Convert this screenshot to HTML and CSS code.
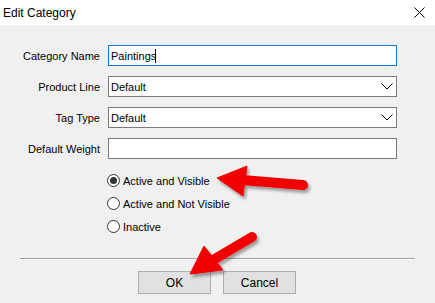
FILE: index.html
```html
<!DOCTYPE html>
<html lang="en">
<head>
    <meta charset="UTF-8">
    <title>Edit Category</title>
    <link rel="stylesheet" href="styles.css">
</head>
<body>
    <div id="dialog">
        <header class="title-bar">
            <span class="title">Edit Category</span>
            <svg class="close" width="11" height="11" viewBox="0 0 11 11">
                <path d="M0.5 0.5 L10.5 10.5 M10.5 0.5 L0.5 10.5" stroke="#000" stroke-width="1"/>
            </svg>
        </header>

        <section class="content">
            <div class="form-grid">
                <label for="cat-name">Category Name</label>
                <div class="field focused"><input id="cat-name" value="Paintings"><span class="caret"></span></div>

                <label>Product Line</label>
                <div class="field select"><span>Default</span>
                    <svg width="12" height="7" viewBox="0 0 12 7"><path d="M0.5 0.5 L6 6 L11.5 0.5" fill="none" stroke="#000" stroke-width="1"/></svg>
                </div>

                <label>Tag Type</label>
                <div class="field select"><span>Default</span>
                    <svg width="12" height="7" viewBox="0 0 12 7"><path d="M0.5 0.5 L6 6 L11.5 0.5" fill="none" stroke="#000" stroke-width="1"/></svg>
                </div>

                <label>Default Weight</label>
                <div class="field"></div>
            </div>

            <div class="radios">
                <div class="radio checked"><span class="dot"></span>Active and Visible</div>
                <div class="radio"><span class="dot"></span>Active and Not Visible</div>
                <div class="radio"><span class="dot"></span>Inactive</div>
            </div>

            <hr class="separator">

            <div class="buttons">
                <button>OK</button>
                <button>Cancel</button>
            </div>
        </section>

        <!-- red callout arrows drawn over the dialog -->
        <svg class="arrows" width="435" height="303" viewBox="0 0 435 303">
            <defs>
                <filter id="shadow" x="-20%" y="-20%" width="140%" height="140%">
                    <feDropShadow dx="2" dy="3" stdDeviation="1.5" flood-color="#000" flood-opacity="0.35"/>
                </filter>
            </defs>
            <g filter="url(#shadow)" fill="#f20000" stroke="#f20000">
                <line x1="242" y1="180" x2="303" y2="185" stroke-width="10" stroke-linecap="round"/>
                <polygon points="217,178 247,166 243,196" stroke-width="1"/>
                <line x1="208" y1="263" x2="252" y2="237" stroke-width="10" stroke-linecap="round"/>
                <polygon points="190,274 204,246 223,270" stroke-width="1"/>
            </g>
        </svg>
    </div>
</body>
</html>
```

FILE: styles.css
```css
body {
    margin: 0;
    font-family: 'Liberation Sans', Arial, sans-serif;
    font-size: 11px;
    color: #000;
}

#dialog {
    position: relative;
    width: 435px;
    height: 303px;
    background-color: #f0f0f0;
    overflow: hidden;
}

.title-bar {
    height: 25px;
    background-color: #fff;
    display: flex;
    align-items: center;
    justify-content: space-between;
    padding: 0 10px 0 3px;
}

.title {
    font-size: 12px;
}

.content {
    padding-top: 20px;
}

.form-grid {
    display: grid;
    grid-template-columns: 100px 289px;
    column-gap: 8px;
    row-gap: 10px;
}

.form-grid label {
    text-align: right;
    align-self: center;
    color: #000;
}

.field {
    height: 21px;
    box-sizing: border-box;
    border: 1px solid #7a7a7a;
    background-color: #fff;
    display: flex;
    align-items: center;
    padding: 0 2px;
}

.field.focused {
    border-color: #0078d7;
}

.field input {
    border: none;
    outline: none;
    padding: 0;
    margin: 0;
    font: inherit;
    width: 44px;
    background: transparent;
}

.caret {
    width: 1px;
    height: 14px;
    background-color: #000;
}

.field.select {
    justify-content: space-between;
    padding-right: 3px;
}

.radios {
    margin: 10px 0 0 107px;
    display: flex;
    flex-direction: column;
}

.radio {
    height: 23px;
    display: flex;
    align-items: center;
}

.dot {
    width: 11px;
    height: 11px;
    border: 1px solid #333;
    border-radius: 50%;
    background-color: #fff;
    margin-right: 3px;
    display: flex;
    align-items: center;
    justify-content: center;
}

.radio.checked .dot::after {
    content: '';
    width: 7px;
    height: 7px;
    border-radius: 50%;
    background-color: #333;
}

.separator {
    margin: 20px 20px 0 20px;
    border: none;
    border-top: 1px solid #a0a0a0;
    border-bottom: 1px solid #fff;
    height: 0;
}

.buttons {
    display: flex;
    gap: 12px;
    margin: 11px 0 0 138px;
}

.buttons button {
    width: 73px;
    height: 23px;
    background-color: #e1e1e1;
    border: 1px solid #adadad;
    font: inherit;
    font-size: 12px;
    padding: 0;
}

.arrows {
    position: absolute;
    left: 0;
    top: 0;
    pointer-events: none;
}
```
